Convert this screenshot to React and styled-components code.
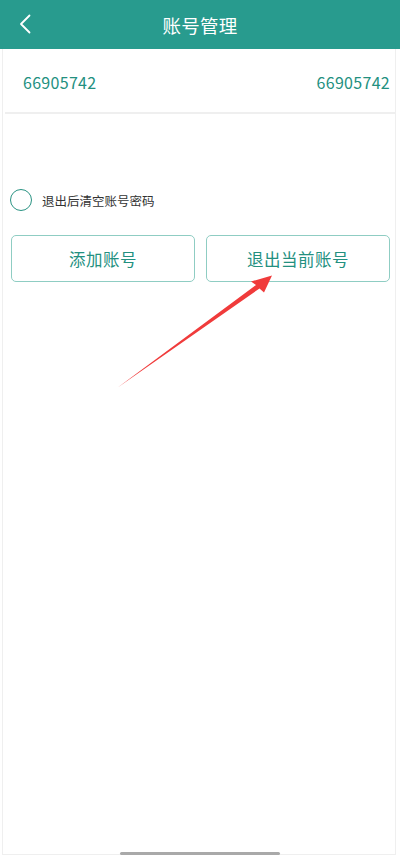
import React, { useState } from 'react';
import styled, { createGlobalStyle } from 'styled-components';

const colors = {
  teal: '#289b8e',
  tealText: '#23907f',
  tealBorder: '#8fcdc3',
  text: '#333333',
  line: '#efefef',
  arrow: '#f03b3b',
};

const GlobalStyle = createGlobalStyle`
  html, body {
    margin: 0;
    padding: 0;
    background: #ffffff;
  }
  body {
    font-family: "Noto Sans CJK SC", "Noto Sans", sans-serif;
  }
  * {
    box-sizing: border-box;
  }
`;

const Screen = styled.div`
  position: relative;
  width: 400px;
  height: 856px;
  display: flex;
  flex-direction: column;
  overflow: hidden;
  background: #fff;
`;

const Header = styled.header`
  position: relative;
  height: 49px;
  flex-shrink: 0;
  background: ${colors.teal};
  display: flex;
  align-items: center;
  justify-content: center;
`;

const BackButton = styled.button`
  position: absolute;
  left: 13px;
  top: 12px;
  width: 24px;
  height: 24px;
  padding: 0;
  border: 0;
  background: transparent;
  display: flex;
  align-items: center;
  justify-content: center;
`;

const Title = styled.h1`
  margin: 0;
  font-size: 18.5px;
  font-weight: 400;
  color: #fff;
  letter-spacing: 0.3px;
`;

const Panel = styled.main`
  flex: 1;
  margin: 0 4px 1px 2px;
  border-left: 1px solid ${colors.line};
  border-right: 1px solid ${colors.line};
  border-bottom: 1px solid ${colors.line};
  display: flex;
  flex-direction: column;
`;

const AccountRow = styled.div`
  height: 65px;
  margin-left: 2px;
  padding: 2px 5px 0 18px;
  border-bottom: 2px solid ${colors.line};
  display: flex;
  align-items: center;
  justify-content: space-between;
  color: ${colors.tealText};
  font-size: 16px;
  letter-spacing: 0.3px;
`;

const OptionRow = styled.label`
  margin-top: 75px;
  padding-left: 7px;
  display: flex;
  align-items: center;
  gap: 10px;
  font-size: 12.5px;
  color: ${colors.text};
`;

const Radio = styled.span`
  width: 22px;
  height: 22px;
  border-radius: 50%;
  border: 1.6px solid ${props => (props.checked ? colors.teal : '#2a9383')};
  background: ${props => (props.checked ? colors.teal : 'transparent')};
`;

const Actions = styled.div`
  margin-top: 24px;
  padding: 0 5px 0 8px;
  display: grid;
  grid-template-columns: 1fr 1fr;
  gap: 11px;
`;

const ActionButton = styled.button`
  height: 47px;
  border: 1px solid ${colors.tealBorder};
  border-radius: 5px;
  background: #fff;
  color: ${colors.tealText};
  font-family: inherit;
  font-size: 16.5px;
  letter-spacing: 0.5px;
`;

const Overlay = styled.svg`
  position: absolute;
  left: 0;
  top: 0;
  pointer-events: none;
`;

const HomeBar = styled.div`
  position: absolute;
  left: 120px;
  bottom: 1px;
  width: 160px;
  height: 3px;
  border-radius: 2px;
  background: #a9a9a9;
`;

export default function App() {
  const [clear, setClear] = useState(false);

  return (
    <Screen>
      <GlobalStyle />
      <Header>
        <BackButton aria-label="back">
          <svg width="16" height="22" viewBox="0 0 16 22">
            <path d="M12.5 2.5 L4 11 L12.5 19.5" fill="none" stroke="#fff" strokeWidth="1.8" strokeLinecap="round" strokeLinejoin="round" />
          </svg>
        </BackButton>
        <Title>账号管理</Title>
      </Header>
      <Panel>
        <AccountRow>
          <span>66905742</span>
          <span>66905742</span>
        </AccountRow>
        <OptionRow onClick={() => setClear(!clear)}>
          <Radio checked={clear} />
          <span>退出后清空账号密码</span>
        </OptionRow>
        <Actions>
          <ActionButton>添加账号</ActionButton>
          <ActionButton>退出当前账号</ActionButton>
        </Actions>
      </Panel>
      <Overlay width="400" height="856" viewBox="0 0 400 856">
        <polygon
          points="117,388 256,285 251,281.5 272,275.5 264,292.5 259.5,288.5"
          fill={colors.arrow}
        />
      </Overlay>
      <HomeBar />
    </Screen>
  );
}
